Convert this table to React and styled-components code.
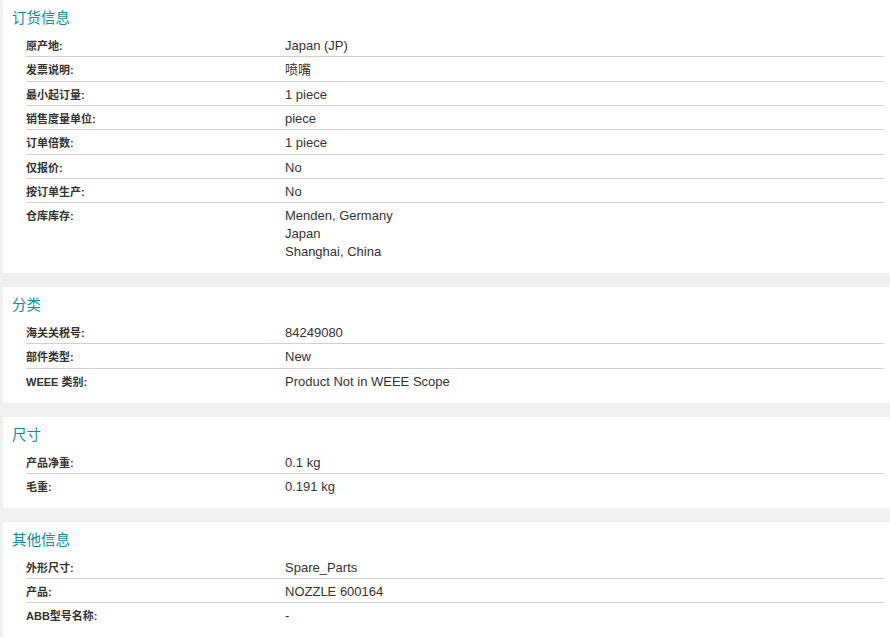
import React from "react";
import styled, { createGlobalStyle } from "styled-components";

const GlobalStyle = createGlobalStyle`
  html, body {
    margin: 0;
    padding: 0;
    background: #f0f0f0;
  }
  body {
    font-family: "Liberation Sans", Arial, "Noto Sans CJK SC", sans-serif;
    color: #333;
  }
`;

const sections = [
  {
    title: "订货信息",
    rows: [
      ["原产地:", ["Japan (JP)"]],
      ["发票说明:", ["喷嘴"]],
      ["最小起订量:", ["1 piece"]],
      ["销售度量单位:", ["piece"]],
      ["订单倍数:", ["1 piece"]],
      ["仅报价:", ["No"]],
      ["按订单生产:", ["No"]],
      ["仓库库存:", ["Menden, Germany", "Japan", "Shanghai, China"]],
    ],
  },
  {
    title: "分类",
    rows: [
      ["海关关税号:", ["84249080"]],
      ["部件类型:", ["New"]],
      ["WEEE 类别:", ["Product Not in WEEE Scope"]],
    ],
  },
  {
    title: "尺寸",
    rows: [
      ["产品净重:", ["0.1 kg"]],
      ["毛重:", ["0.191 kg"]],
    ],
  },
  {
    title: "其他信息",
    rows: [
      ["外形尺寸:", ["Spare_Parts"]],
      ["产品:", ["NOZZLE 600164"]],
      ["ABB型号名称:", ["-"]],
    ],
  },
];

const Page = styled.div`
  display: flex;
  flex-direction: column;
  gap: 14px;
  padding-left: 3px;
`;

const Card = styled.section`
  background: #fff;
  padding: 8px 6px 9.5px 9px;
`;

const Title = styled.h2`
  margin: 0 0 5px;
  font-size: 14.5px;
  line-height: 20px;
  font-weight: normal;
  color: #168a9a;
`;

const Rows = styled.div`
  display: flex;
  flex-direction: column;
  margin-left: 14px;
`;

const Row = styled.div`
  display: grid;
  grid-template-columns: 259px 1fr;
  padding: 4px 0 1.33px;
  border-bottom: 1px solid #d0d0d0;
  &:last-child {
    border-bottom-color: transparent;
  }
`;

const Label = styled.div`
  font-size: 11px;
  font-weight: bold;
  line-height: 18px;
  color: #333;
`;

const Value = styled.div`
  font-size: 13px;
  line-height: 18px;
  color: #333;
`;

export default function App() {
  return (
    <>
      <GlobalStyle />
      <Page>
        {sections.map((s) => (
          <Card key={s.title}>
            <Title>{s.title}</Title>
            <Rows>
              {s.rows.map(([label, values]) => (
                <Row key={label}>
                  <Label>{label}</Label>
                  <Value>
                    {values.map((v) => (
                      <div key={v}>{v}</div>
                    ))}
                  </Value>
                </Row>
              ))}
            </Rows>
          </Card>
        ))}
      </Page>
    </>
  );
}
